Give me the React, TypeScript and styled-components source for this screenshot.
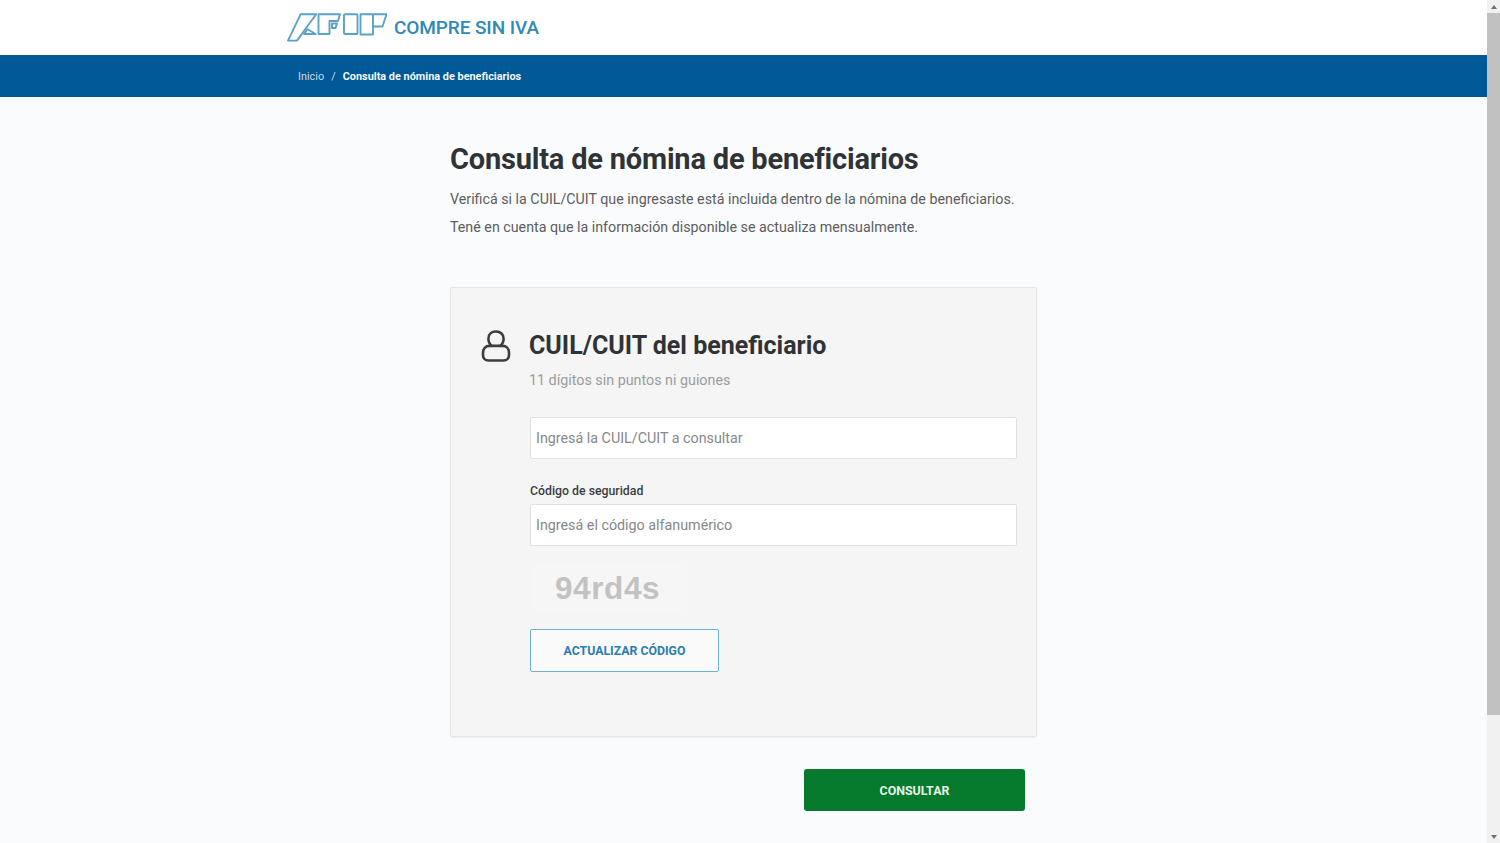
import styled, { createGlobalStyle } from "styled-components";

const GlobalStyle = createGlobalStyle`
  html, body {
    margin: 0;
    height: 100%;
    overflow: hidden;
    background: #fafbfd;
    font-family: Roboto, "Liberation Sans", sans-serif;
  }
  * { box-sizing: border-box; }
`;

const Shell = styled.div`
  display: flex;
  width: 1500px;
  height: 843px;
  overflow: hidden;
`;

const Page = styled.div`
  flex: 1;
  display: flex;
  flex-direction: column;
  min-width: 0;
`;

const Header = styled.header`
  height: 55px;
  background: #ffffff;
  display: flex;
  justify-content: center;
`;

const Container = styled.div`
  width: 913px;
  display: flex;
  align-items: center;
`;

const Brand = styled.div`
  display: flex;
  align-items: center;
  gap: 7px;
  margin-top: -1px;
`;

const BrandName = styled.span`
  font-size: 19px;
  font-weight: 500;
  color: #3089b6;
  letter-spacing: -0.1px;
`;

const CrumbBar = styled.nav`
  height: 42px;
  background: #005896;
  display: flex;
  justify-content: center;
`;

const Crumbs = styled(Container)`
  padding-left: 11px;
  font-size: 10.9px;
  color: #c9dbe8;
`;

const Separator = styled.span`
  margin: 0 7px;
`;

const CurrentCrumb = styled.span`
  font-weight: 700;
  color: #f2f6f9;
`;

const Main = styled.main`
  flex: 1;
  display: flex;
  flex-direction: column;
  align-items: center;
  background: #fafbfd;
`;

const Column = styled.div`
  width: 587px;
  padding-top: 45px;
  display: flex;
  flex-direction: column;
`;

const Title = styled.h1`
  margin: 0;
  font-size: 29px;
  line-height: 34px;
  font-weight: 700;
  color: #303336;
  letter-spacing: -0.2px;
`;

const Lead = styled.p`
  margin: 0;
  font-size: 14.25px;
  line-height: 28px;
  color: #5a5d60;
`;

const Intro = styled.div`
  margin-top: 9px;
  margin-bottom: 46px;
`;

const Card = styled.section`
  height: 450px;
  background: #f5f5f5;
  border: 1px solid #e6e6e6;
  border-radius: 2px;
  box-shadow: 0 1px 2px rgba(0, 0, 0, 0.06);
  padding: 41px 19px 0 30px;
  display: flex;
  gap: 19px;
`;

const IconSlot = styled.div`
  width: 30px;
  flex: none;
  padding-top: 1px;
  color: #3a3d40;
`;

const Fields = styled.div`
  flex: 1;
  display: flex;
  flex-direction: column;
  align-items: flex-start;
`;

const CardTitle = styled.h2`
  margin: 0 0 0 -1px;
  font-size: 25px;
  line-height: 34px;
  font-weight: 700;
  color: #303336;
`;

const Hint = styled.p`
  margin: 8px 0 0 -1px;
  font-size: 14.3px;
  line-height: 18px;
  color: #9a9c9e;
`;

const Input = styled.input<{ $gap: number }>`
  width: 100%;
  height: 42px;
  margin-top: ${({ $gap }) => $gap}px;
  padding: 0 5px;
  background: #ffffff;
  border: 1px solid #e0e0e0;
  border-radius: 2px;
  font-family: inherit;
  font-size: 14.3px;
  color: #333333;
  &::placeholder {
    color: #85888b;
    opacity: 1;
  }
`;

const Label = styled.label`
  margin-top: 25px;
  font-size: 12.3px;
  line-height: 14px;
  font-weight: 500;
  color: #3a3d40;
`;

const Captcha = styled.div`
  width: 157px;
  height: 50px;
  margin-top: 17px;
  padding-left: 25px;
  display: flex;
  align-items: center;
  background: #f6f6f6;
  font-family: "Liberation Sans", Arial, sans-serif;
  font-size: 31.5px;
  font-weight: 700;
  letter-spacing: 0.6px;
  color: #c2c2c2;
`;

const OutlineButton = styled.button`
  width: 189px;
  height: 43px;
  margin-top: 16px;
  background: #fafafa;
  border: 1px solid #6fb0d6;
  border-radius: 2px;
  font-family: inherit;
  font-size: 12.3px;
  font-weight: 700;
  color: #2a7eaf;
`;

const Actions = styled.div`
  display: flex;
  justify-content: flex-end;
  padding: 32px 12px 0 0;
`;

const SubmitButton = styled.button`
  width: 221px;
  height: 42px;
  background: #067a2c;
  border: 0;
  border-radius: 3px;
  font-family: inherit;
  font-size: 12.4px;
  font-weight: 700;
  color: #e6f4ea;
`;

const Scrollbar = styled.div`
  width: 13px;
  flex: none;
  display: flex;
  flex-direction: column;
  align-items: center;
  background: #f1f1f1;
`;

const ScrollArrow = styled.div<{ $down?: boolean }>`
  height: 13px;
  flex: none;
  display: flex;
  align-items: center;
  justify-content: center;
  &::before {
    content: "";
    border-left: 3px solid transparent;
    border-right: 3px solid transparent;
    border-bottom: ${({ $down }) => ($down ? "0" : "4px solid #707070")};
    border-top: ${({ $down }) => ($down ? "4px solid #707070" : "0")};
  }
`;

const ScrollThumb = styled.div`
  width: 100%;
  height: 702px;
  background: #c1c1c1;
`;

const ScrollTrack = styled.div`
  flex: 1;
  width: 100%;
`;

const AfipLogo = () => (
  <svg width="100" height="29" viewBox="0 0 100 29" fill="none" stroke="#5aa3c3" strokeWidth="1.9" strokeLinejoin="round">
    <path d="M1 27.6 L13.7 1.2 H29.2 L20 13.7 L10 27.6 Z" />
    <path d="M20.5 16.3 L28.6 21 H17 Z" />
    <path d="M31.5 1.2 H53 L51 8 H42.5 V21 H31.5 Z" />
    <path d="M45 10.5 H50 L48.5 15 H45 Z" />
    <rect x="57" y="1.2" width="13.5" height="19.8" rx="1" />
    <path d="M73.5 1.2 H99.5 L95.5 13.5 H86 V21.5 H73.5 Z" />
    <path d="M86 1.2 V13.5" />
  </svg>
);

const UserIcon = () => (
  <svg width="30" height="32" viewBox="0 0 30 32" fill="none" stroke="currentColor" strokeWidth="2.6" strokeLinejoin="round">
    <path d="M15 1.5 c-4.6 0 -7.6 3 -7.6 7.2 c0 3.4 1.6 5.8 3.6 7.2 h8 c2 -1.4 3.6 -3.8 3.6 -7.2 c0 -4.2 -3 -7.2 -7.6 -7.2 Z" />
    <path d="M11 15.9 H8.5 C4.4 15.9 2 18.8 2 22.4 V25 C2 28.2 4 30.5 7.5 30.5 H22.5 C26 30.5 28 28.2 28 25 V22.4 C28 18.8 25.6 15.9 21.5 15.9 H19" />
  </svg>
);

export default function App() {
  return (
    <Shell>
      <GlobalStyle />
      <Page>
        <Header>
          <Container>
            <Brand>
              <AfipLogo />
              <BrandName>COMPRE SIN IVA</BrandName>
            </Brand>
          </Container>
        </Header>
        <CrumbBar>
          <Crumbs>
            <span>Inicio</span>
            <Separator>/</Separator>
            <CurrentCrumb>Consulta de nómina de beneficiarios</CurrentCrumb>
          </Crumbs>
        </CrumbBar>
        <Main>
          <Column>
            <Title>Consulta de nómina de beneficiarios</Title>
            <Intro>
              <Lead>Verificá si la CUIL/CUIT que ingresaste está incluida dentro de la nómina de beneficiarios.</Lead>
              <Lead>Tené en cuenta que la información disponible se actualiza mensualmente.</Lead>
            </Intro>
            <Card>
              <IconSlot>
                <UserIcon />
              </IconSlot>
              <Fields>
                <CardTitle>CUIL/CUIT del beneficiario</CardTitle>
                <Hint>11 dígitos sin puntos ni guiones</Hint>
                <Input $gap={28} placeholder="Ingresá la CUIL/CUIT a consultar" />
                <Label>Código de seguridad</Label>
                <Input $gap={6} placeholder="Ingresá el código alfanumérico" />
                <Captcha>94rd4s</Captcha>
                <OutlineButton>ACTUALIZAR CÓDIGO</OutlineButton>
              </Fields>
            </Card>
            <Actions>
              <SubmitButton>CONSULTAR</SubmitButton>
            </Actions>
          </Column>
        </Main>
      </Page>
      <Scrollbar>
        <ScrollArrow />
        <ScrollThumb />
        <ScrollTrack />
        <ScrollArrow $down />
      </Scrollbar>
    </Shell>
  );
}
